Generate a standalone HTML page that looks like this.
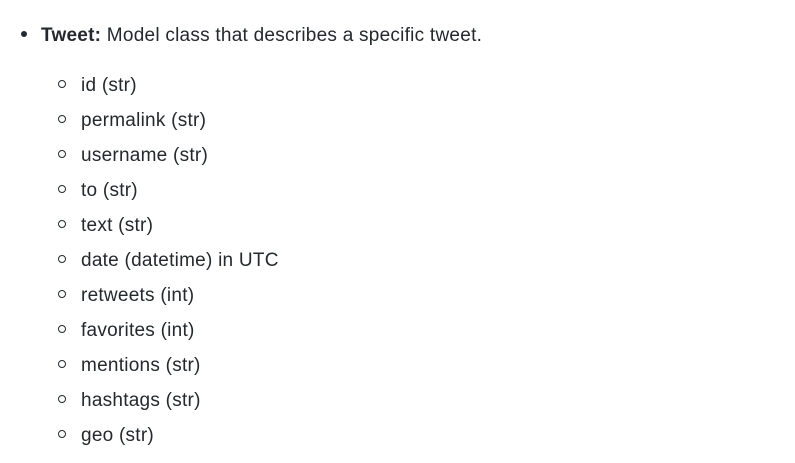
<!DOCTYPE html>
<html><head><style>
body{margin:0;background:#fff;width:795px;height:463px;overflow:hidden;font-family:"Liberation Sans",sans-serif;color:#24292e;font-size:19px;letter-spacing:0.25px}
.l{position:absolute;white-space:nowrap;line-height:24px}
.d{position:absolute;width:6px;height:6px;border-radius:50%;background:#24292e}
.c{position:absolute;border-radius:50%;border:1.3px solid #24292e;box-sizing:border-box;width:8px;height:8px}
</style></head><body>
<div class="d" style="left:21px;top:31px"></div>
<div class="l" style="left:41px;top:24px"><b>Tweet:</b> Model class that describes a specific tweet.</div>
<div class="c" style="left:58px;top:80px"></div><div class="l" style="left:81px;top:74px">id (str)</div>
<div class="c" style="left:58px;top:115px"></div><div class="l" style="left:81px;top:109px">permalink (str)</div>
<div class="c" style="left:58px;top:150px"></div><div class="l" style="left:81px;top:144px">username (str)</div>
<div class="c" style="left:58px;top:185px"></div><div class="l" style="left:81px;top:179px">to (str)</div>
<div class="c" style="left:58px;top:220px"></div><div class="l" style="left:81px;top:214px">text (str)</div>
<div class="c" style="left:58px;top:255px"></div><div class="l" style="left:81px;top:249px">date (datetime) in UTC</div>
<div class="c" style="left:58px;top:290px"></div><div class="l" style="left:81px;top:284px">retweets (int)</div>
<div class="c" style="left:58px;top:325px"></div><div class="l" style="left:81px;top:319px">favorites (int)</div>
<div class="c" style="left:58px;top:360px"></div><div class="l" style="left:81px;top:354px">mentions (str)</div>
<div class="c" style="left:58px;top:395px"></div><div class="l" style="left:81px;top:389px">hashtags (str)</div>
<div class="c" style="left:58px;top:430px"></div><div class="l" style="left:81px;top:424px">geo (str)</div>
</body></html>
